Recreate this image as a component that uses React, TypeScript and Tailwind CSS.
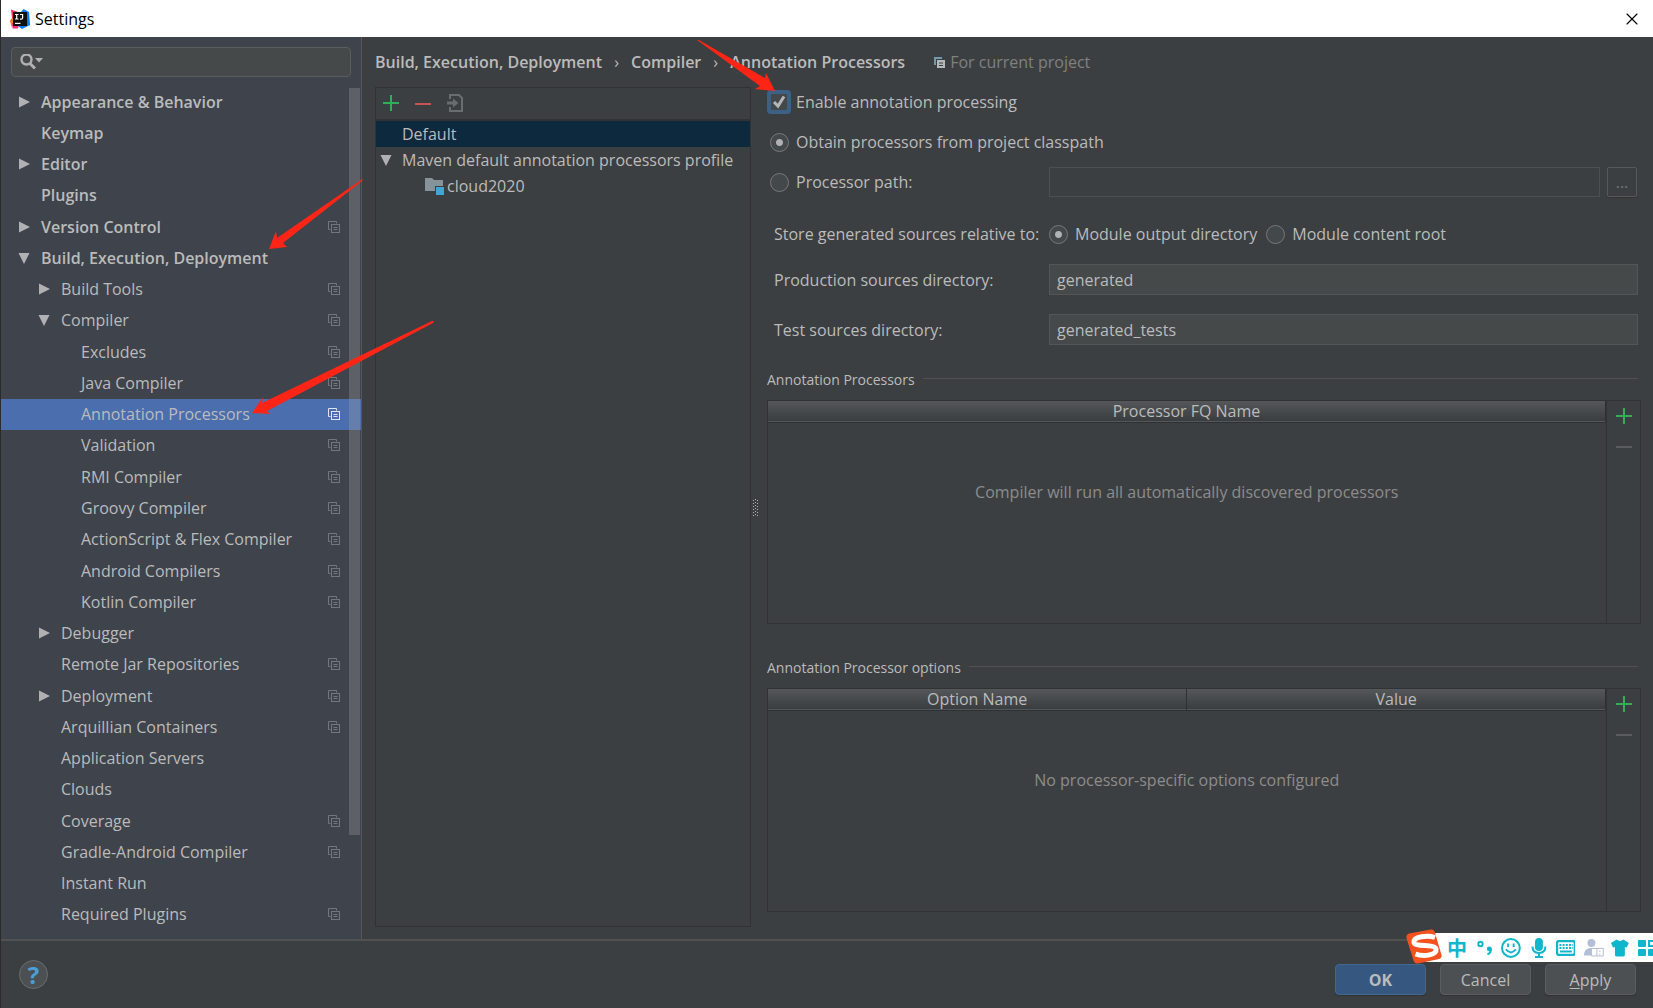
import React, { useState } from 'react';
import { X } from 'lucide-react';

interface TreeItem {
  label: string;
  level: number;
  arrow?: 'open' | 'closed';
  project?: boolean;
}

const TREE: TreeItem[] = [
  { label: 'Appearance & Behavior', level: 0, arrow: 'closed' },
  { label: 'Keymap', level: 0 },
  { label: 'Editor', level: 0, arrow: 'closed' },
  { label: 'Plugins', level: 0 },
  { label: 'Version Control', level: 0, arrow: 'closed', project: true },
  { label: 'Build, Execution, Deployment', level: 0, arrow: 'open' },
  { label: 'Build Tools', level: 1, arrow: 'closed', project: true },
  { label: 'Compiler', level: 1, arrow: 'open', project: true },
  { label: 'Excludes', level: 2, project: true },
  { label: 'Java Compiler', level: 2, project: true },
  { label: 'Annotation Processors', level: 2, project: true },
  { label: 'Validation', level: 2, project: true },
  { label: 'RMI Compiler', level: 2, project: true },
  { label: 'Groovy Compiler', level: 2, project: true },
  { label: 'ActionScript & Flex Compiler', level: 2, project: true },
  { label: 'Android Compilers', level: 2, project: true },
  { label: 'Kotlin Compiler', level: 2, project: true },
  { label: 'Debugger', level: 1, arrow: 'closed' },
  { label: 'Remote Jar Repositories', level: 1, project: true },
  { label: 'Deployment', level: 1, arrow: 'closed', project: true },
  { label: 'Arquillian Containers', level: 1, project: true },
  { label: 'Application Servers', level: 1 },
  { label: 'Clouds', level: 1 },
  { label: 'Coverage', level: 1, project: true },
  { label: 'Gradle-Android Compiler', level: 1, project: true },
  { label: 'Instant Run', level: 1 },
  { label: 'Required Plugins', level: 1, project: true },
];

const INDENT = ['pl-[17px]', 'pl-[37px]', 'pl-[57px]'];

const TreeArrow: React.FC<{ state?: 'open' | 'closed' }> = ({ state }) => (
  <svg className="w-3 h-3 shrink-0" viewBox="0 0 12 12" fill="#afb1b3">
    {state === 'closed' && <path d="M1 0.5 L12 6 L1 11.5 Z" />}
    {state === 'open' && <path d="M0.5 1 H11.5 L6 12 Z" />}
  </svg>
);

const CopyIcon: React.FC<{ className?: string }> = ({ className }) => (
  <svg className={`w-3 h-3 shrink-0 ${className}`} viewBox="0 0 12 12" fill="none" stroke="currentColor">
    <path d="M2.5 8.5 H0.5 V0.5 H8.5 V2.5" />
    <rect x="3.5" y="3.5" width="8" height="8" />
    <path d="M5.5 6.5 H9.5 M5.5 8.5 H9.5" />
  </svg>
);

const PlusIcon = () => (
  <svg className="w-4 h-4" viewBox="0 0 16 16" fill="none" stroke="#33ad56" strokeWidth="2">
    <path d="M8 0 V16 M0 8 H16" />
  </svg>
);

const MinusIcon: React.FC<{ className: string }> = ({ className }) => (
  <svg className={`w-4 h-4 ${className}`} viewBox="0 0 16 16" fill="none" stroke="currentColor" strokeWidth="2">
    <path d="M0 9 H16" />
  </svg>
);

const IdeaLogo = () => (
  <svg className="w-5 h-5" viewBox="0 0 20 20">
    <path d="M1 0.5 L8 3 L10 10 L4 17 L0 12 L2 9 Z" fill="#f8315d" />
    <path d="M0 12 L3 9 L4 15 L1.5 18 Z" fill="#fd8224" />
    <path d="M2 14 L9 15 L8 19.5 L2.5 19.5 Z" fill="#fe2f6e" />
    <path d="M11 3 L13.5 0 L19 3 L20 16 L12 20 L8 17 Z" fill="#087cfa" />
    <rect x="3" y="3" width="14" height="14" fill="#111" />
    <path d="M5 5.5 H8.5 M6.7 5.5 V10 M5 10 H8.5 M10 5.5 H12.6 V9 Q12.6 10.2 11.2 10.2 H10" stroke="#fff" strokeWidth="1.2" fill="none" />
    <path d="M5 14.4 H10.5" stroke="#fff" strokeWidth="1.2" />
  </svg>
);

const TitleBar = () => (
  <header className="h-[37px] shrink-0 bg-white text-black flex items-center justify-between pl-[9px] pr-[11px]">
    <div className="flex items-center gap-[5px]">
      <IdeaLogo />
      <h1 className="text-base">Settings</h1>
    </div>
    <button aria-label="Close">
      <X className="w-5 h-5" strokeWidth={1.4} />
    </button>
  </header>
);

const Sidebar = () => {
  const [selected, setSelected] = useState('Annotation Processors');

  return (
    <nav className="w-[361px] shrink-0 flex flex-col bg-[#3e434c] border-r border-[#54565a] pt-[10px] pb-[9px]">
      <label className="mx-[10px] h-[30px] shrink-0 flex items-center gap-px px-2 bg-[#45494a] border border-[#5a5d5e] rounded">
        <svg className="w-6 h-4 shrink-0" viewBox="0 0 24 16" fill="none" stroke="#afb1b3">
          <circle cx="6.5" cy="5.5" r="5" strokeWidth="2.4" />
          <path d="M10 9.5 L15 14.5" strokeWidth="3" />
          <path d="M15 4 H23 L19 8.5 Z" fill="#afb1b3" stroke="none" />
        </svg>
        <input type="text" aria-label="Search settings" className="w-full bg-transparent outline-none" />
      </label>

      <div className="relative mt-[9px] flex-1 flex flex-col">
        <ul className="flex-1 grid auto-rows-fr">
          {TREE.map(item => {
            const isSelected = item.label === selected;
            return (
              <li key={item.label} className="flex">
                <button
                  onClick={() => setSelected(item.label)}
                  className={`flex-1 flex items-center pr-[21px] text-left ${INDENT[item.level]} ${isSelected ? 'bg-[#4b6eaf]' : ''}`}
                >
                  <TreeArrow state={item.arrow} />
                  <span className={`ml-[11px] flex-1 ${item.level === 0 ? 'font-semibold' : ''}`}>{item.label}</span>
                  {item.project && <CopyIcon className={isSelected ? 'text-[#dfe6f2]' : 'text-[#72777d]'} />}
                </button>
              </li>
            );
          })}
        </ul>
        <div className="absolute right-px top-[2px] bottom-[95px] w-[11px] bg-[#a6a6a6]/30" />
      </div>
    </nav>
  );
};

const Breadcrumbs = () => (
  <div className="h-[50px] shrink-0 flex items-center font-semibold">
    <span>Build, Execution, Deployment</span>
    <span className="w-[29px] text-center font-normal">›</span>
    <span>Compiler</span>
    <span className="w-[29px] text-center font-normal">›</span>
    <span>Annotation Processors</span>
    <svg className="w-[11px] h-[11px] ml-[29px] mr-[5px] shrink-0" viewBox="0 0 11 11">
      <path d="M0 0 H8 V2 H2 V8 H0 Z" fill="#6f9bb0" />
      <rect x="3" y="3" width="8" height="8" fill="#b4b8ba" />
      <path d="M5 6 H9 M5 8.5 H9" stroke="#3c3f41" />
    </svg>
    <span className="font-normal text-[#808080]">For current project</span>
  </div>
);

const ProfileList = () => (
  <section className="w-[376px] shrink-0 flex flex-col border border-[#323232]">
    <div className="h-[33px] shrink-0 flex items-center gap-4 pl-[7px] pb-px border-b-2 border-[#323232]">
      <button aria-label="Add profile"><PlusIcon /></button>
      <button aria-label="Remove profile"><MinusIcon className="text-[#c75450]" /></button>
      <button aria-label="Move to profile">
        <svg className="w-[18px] h-[18px]" viewBox="0 0 18 18" fill="none" stroke="#6a6d6f" strokeWidth="2">
          <path d="M3 5 V1 H12 L15 4 V17 H3 V13" />
          <path d="M-1 9 H7" strokeWidth="3" />
          <path d="M6 4.5 L11.5 9 L6 13.5 Z" fill="#6a6d6f" stroke="none" />
        </svg>
      </button>
    </div>
    <ul>
      <li className="h-[26px] flex items-center pl-[26px] bg-[#0d293e]">Default</li>
      <li className="h-[26px] flex items-center pl-1 gap-[10px]">
        <TreeArrow state="open" />
        Maven default annotation processors profile
      </li>
      <li className="h-[26px] flex items-center pl-[49px] gap-[2px]">
        <svg className="w-5 h-[18px]" viewBox="0 0 20 18">
          <path d="M0 1 H7 L9 3 H18 V14 H0 Z" fill="#87939a" />
          <rect x="10" y="9" width="10" height="9" fill="#3c3f41" />
          <rect x="11" y="10" width="8" height="8" fill="#40a6d3" />
        </svg>
        cloud2020
      </li>
    </ul>
  </section>
);

const Splitter = () => (
  <div className="w-4 shrink-0 flex items-center pl-px">
    <svg className="w-[6px] h-[19px]" viewBox="0 0 6 19" stroke="#b0b0b0" strokeDasharray="1 2">
      <path d="M1.5 2 V19 M3.5 1 V19 M5.5 2 V19" strokeWidth="1" />
    </svg>
  </div>
);

interface RadioProps {
  label: string;
  name: string;
  checked: boolean;
  onChange: () => void;
}

const Radio: React.FC<RadioProps> = ({ label, name, checked, onChange }) => (
  <label className="flex items-center gap-[7px] whitespace-nowrap">
    <input
      type="radio"
      name={name}
      checked={checked}
      onChange={onChange}
      className="appearance-none w-[19px] h-[19px] shrink-0 rounded-full border border-[#76797a] bg-[#43484a] checked:bg-[radial-gradient(circle,#afb1b3_3px,#43484a_4px)]"
    />
    {label}
  </label>
);

interface EditableTableProps {
  title: string;
  columns: string[];
  emptyText: string;
}

const EditableTable: React.FC<EditableTableProps> = ({ title, columns, emptyText }) => (
  <section>
    <div className="h-6 flex items-center gap-2 pr-[3px]">
      <h2 className="text-sm whitespace-nowrap">{title}</h2>
      <div className="flex-1 h-px mb-1 bg-[#515151]" />
    </div>
    <div className="mt-2 h-[224px] flex border border-[#323232]">
      <div className="flex-1 min-w-0">
        <table className="w-full h-full table-fixed">
          <thead>
            <tr className="h-[21px] bg-linear-to-b from-[#54585a] to-[#3a3d3f] border-b border-[#2e3133]">
              {columns.map(column => (
                <th key={column} className="p-0 leading-5 font-normal border-r border-[#2e3133]">{column}</th>
              ))}
            </tr>
          </thead>
          <tbody>
            <tr>
              <td colSpan={columns.length} className="pb-[62px] align-middle text-center text-[#8c8c8c]">{emptyText}</td>
            </tr>
          </tbody>
        </table>
      </div>
      <div className="w-[34px] shrink-0 flex flex-col items-center gap-[14px] pt-[7px] border-l border-[#323232]">
        <button aria-label={`Add to ${title}`}><PlusIcon /></button>
        <button aria-label={`Remove from ${title}`} disabled><MinusIcon className="text-[#5a5c5d]" /></button>
      </div>
    </div>
  </section>
);

const ProcessorSettings = () => {
  const [enabled, setEnabled] = useState(true);
  const [source, setSource] = useState('classpath');
  const [relativeTo, setRelativeTo] = useState('output');
  const [production, setProduction] = useState('generated');
  const [tests, setTests] = useState('generated_tests');

  return (
    <section className="flex-1 min-w-0">
      <label className="h-[30px] flex items-center gap-[5px]">
        <span className="relative w-6 h-6">
          <input
            type="checkbox"
            checked={enabled}
            onChange={e => setEnabled(e.target.checked)}
            className="appearance-none block w-6 h-6 rounded border-4 border-[#3d6185] bg-[#43494a]"
          />
          {enabled && (
            <svg className="absolute inset-0 pointer-events-none" viewBox="0 0 24 24" fill="none" stroke="#b4b6b7" strokeWidth="3">
              <path d="M7 12 L11 16 L17 6.5" />
            </svg>
          )}
        </span>
        Enable annotation processing
      </label>

      <div className="h-[50px] flex items-center pl-[3px]">
        <Radio name="source" label="Obtain processors from project classpath" checked={source === 'classpath'} onChange={() => setSource('classpath')} />
      </div>

      <div className="h-[30px] flex items-center pl-[3px] pr-1">
        <div className="w-[279px] shrink-0">
          <Radio name="source" label="Processor path:" checked={source === 'path'} onChange={() => setSource('path')} />
        </div>
        <input type="text" aria-label="Processor path" disabled={source !== 'path'} className="flex-1 min-w-0 h-[30px] px-2 border border-[#4b4f50] outline-none" />
        <button className="ml-[7px] w-[30px] h-[30px] rounded-xs border border-[#56595a] text-[#777] shadow-[0_1px_1px_#323232]">...</button>
      </div>

      <div className="mt-[22px] h-[30px] flex items-center pl-[7px] whitespace-nowrap">
        <span className="w-[275px] shrink-0">Store generated sources relative to:</span>
        <div className="flex gap-[9px]">
          <Radio name="relative" label="Module output directory" checked={relativeTo === 'output'} onChange={() => setRelativeTo('output')} />
          <Radio name="relative" label="Module content root" checked={relativeTo === 'root'} onChange={() => setRelativeTo('root')} />
        </div>
      </div>

      <div className="mt-[15px] flex items-center pl-[7px] pr-[3px]">
        <label htmlFor="production" className="w-[275px] shrink-0">Production sources directory:</label>
        <input id="production" type="text" value={production} onChange={e => setProduction(e.target.value)} className="flex-1 min-w-0 h-[31px] px-[7px] bg-[#45494a] border border-[#525657] outline-none" />
      </div>
      <div className="mt-[19px] mb-[23px] flex items-center pl-[7px] pr-[3px]">
        <label htmlFor="tests" className="w-[275px] shrink-0">Test sources directory:</label>
        <input id="tests" type="text" value={tests} onChange={e => setTests(e.target.value)} className="flex-1 min-w-0 h-[31px] px-[7px] bg-[#45494a] border border-[#525657] outline-none" />
      </div>

      <div className="flex flex-col gap-8">
        <EditableTable title="Annotation Processors" columns={['Processor FQ Name']} emptyText="Compiler will run all automatically discovered processors" />
        <EditableTable title="Annotation Processor options" columns={['Option Name', 'Value']} emptyText="No processor-specific options configured" />
      </div>
    </section>
  );
};

const Footer = () => (
  <footer className="h-[69px] shrink-0 flex items-start justify-between px-[17px] pt-[19px] border-t-2 border-[#515151]">
    <button aria-label="Help" className="w-[29px] h-[29px] ml-px rounded-full border border-[#6b6e70] bg-[#4c5052] text-[#4a9fd8] text-2xl leading-none font-bold">?</button>
    <div className="flex gap-[14px] pt-1">
      <button className="w-[91px] h-[31px] rounded-sm border border-[#43688f] bg-[#365880] font-bold shadow-[0_1px_1px_#323232]">OK</button>
      <button className="w-[91px] h-[31px] rounded-sm border border-[#5a5e60] bg-[#4c5052] shadow-[0_1px_1px_#323232]">Cancel</button>
      <button className="w-[91px] h-[31px] rounded-sm border border-[#5a5e60] bg-[#4c5052] shadow-[0_1px_1px_#323232]"><span className="underline underline-offset-2">A</span>pply</button>
    </div>
  </footer>
);

// Input method toolbar floating over the dialog's corner
const InputMethodBar = () => (
  <div className="absolute right-0 bottom-[46px] h-[29px] w-[232px] flex items-center pl-[26px] bg-white text-[#10b6cb]">
    <svg className="absolute -left-[15px] -top-1 w-9 h-9" viewBox="0 0 36 36">
      <path d="M3 4.5 L25 0.6 Q28 0 28.8 3 L35.5 26 Q36 29 33 30 L12 34.5 Q8.5 35 7.5 31.5 L0.5 9 Q0 5.5 3 4.5 Z" fill="#f4511e" />
      <path d="M29 8.5 C22 6 7 7.5 8 13.5 C9 18.5 29 14.5 30 20 C31 26 18 28 9.5 25" fill="none" stroke="#fff" strokeWidth="5" />
    </svg>
    <span className="w-5 text-center text-xl leading-none font-bold font-['Noto_Sans_CJK_SC',sans-serif]">中</span>
    <svg className="ml-[10px] w-4 h-4" viewBox="0 0 16 16" fill="none" stroke="currentColor" strokeWidth="2">
      <circle cx="3.5" cy="4" r="2.2" />
      <circle cx="12.5" cy="9" r="2.5" fill="currentColor" stroke="none" />
      <path d="M14 9 Q14.5 13 10.5 14.5" />
    </svg>
    <svg className="ml-2 w-5 h-5" viewBox="0 0 20 20" fill="none" stroke="currentColor" strokeWidth="2">
      <circle cx="10" cy="10" r="9" />
      <path d="M7.2 5.5 V9 M12.8 5.5 V9 M5 11.5 Q10 17.5 15 11.5" />
    </svg>
    <svg className="ml-[10px] w-4 h-5" viewBox="0 0 16 20" fill="none" stroke="currentColor" strokeWidth="2">
      <rect x="4" y="0" width="8" height="13" rx="4" fill="currentColor" stroke="none" />
      <path d="M1.5 8.5 Q1.5 15 8 15 Q14.5 15 14.5 8.5 M8 15 V19 M4 19 H12" />
    </svg>
    <svg className="ml-[9px] w-5 h-4" viewBox="0 0 20 16" fill="none" stroke="currentColor" strokeWidth="2">
      <rect x="1" y="1" width="18" height="14" rx="2" strokeWidth="2.4" />
      <path d="M3.5 5 H17 M3.5 8 H17" strokeDasharray="2 1.2" />
      <path d="M4 11.5 H16" />
    </svg>
    <svg className="ml-[9px] w-5 h-5 text-[#b3bfd6]" viewBox="0 0 20 20" fill="currentColor">
      <circle cx="7.5" cy="5" r="4" />
      <path d="M0 17.5 Q0 11 6 10 H10 V17.5 Z" />
      <path d="M7.5 10.5 H19.5 V18 H7.5 Z M13 10.5 V18 M16 12.5 V14 M16 15.5 V17" fill="#fff" stroke="currentColor" />
    </svg>
    <svg className="ml-[7px] w-[18px] h-[18px]" viewBox="0 0 18 18" fill="currentColor">
      <path d="M5.5 0.5 Q9 3.5 12.5 0.5 L18 4 L16 8.5 L14 8 V16 Q14 17.5 12.5 17.5 H5.5 Q4 17.5 4 16 V8 L2 8.5 L0 4 Z" />
    </svg>
    <svg className="ml-[9px] w-[15px] h-4 shrink-0" viewBox="0 0 15 16" fill="currentColor">
      <rect width="8" height="7" rx="1" />
      <rect y="9" width="8" height="7" rx="1" />
      <rect x="10" y="9" width="8" height="7" rx="1" />
      <rect x="11" y="1" width="8" height="5" fill="none" stroke="currentColor" strokeWidth="2" />
    </svg>
  </div>
);

const Arrows = () => (
  <svg className="absolute inset-0 w-full h-full pointer-events-none" fill="#ff2516">
    <path d="M696 40 L698 40 L764 78 L765 73 L774 91 L754 89 L759 86 Z" />
    <path d="M360 180 L362 179 L361 181 L282 243 L286 247 L268 249 L275 231 L276 238 Z" />
    <path d="M431 321 L433 321 L432 323 L266 411 L269 414 L251 413 L262 397 L261 403 Z" />
  </svg>
);

export default function App() {
  return (
    <div className="relative min-h-screen flex flex-col overflow-hidden bg-[#3c3f41] border-l border-[#2b2b2b] text-base leading-5 text-[#bbbbbb] font-['Open_Sans','Noto_Sans_CJK_SC',sans-serif]">
      <TitleBar />
      <div className="flex-1 flex">
        <Sidebar />
        <main className="flex-1 min-w-0 flex flex-col pl-[13px] pr-3 pb-3">
          <Breadcrumbs />
          <div className="flex-1 flex">
            <ProfileList />
            <Splitter />
            <ProcessorSettings />
          </div>
        </main>
      </div>
      <Footer />
      <InputMethodBar />
      <Arrows />
    </div>
  );
}
